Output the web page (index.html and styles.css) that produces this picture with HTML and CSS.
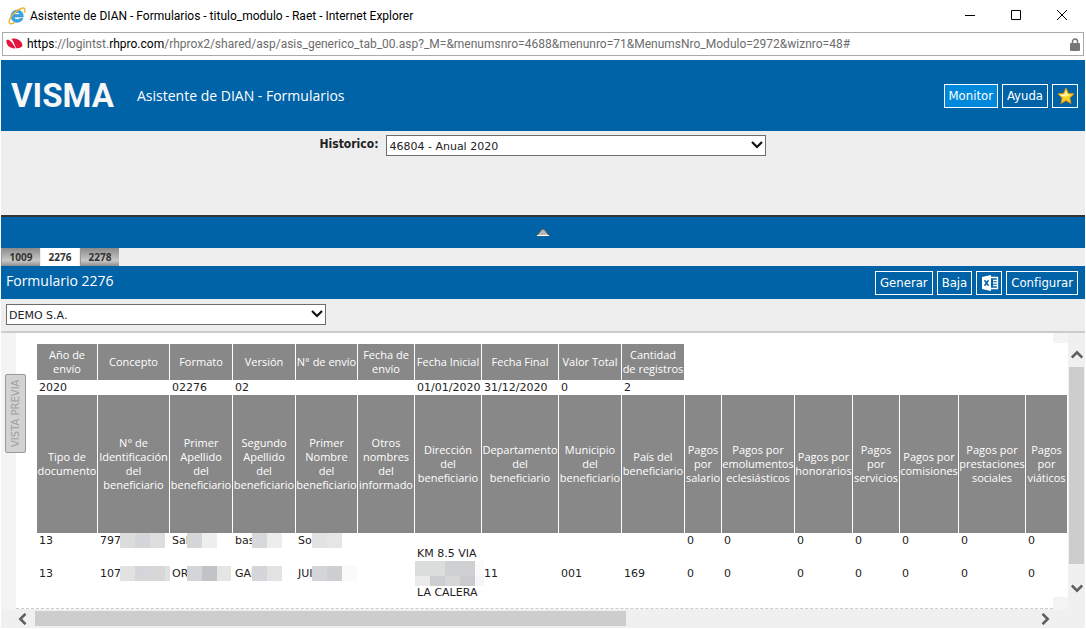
FILE: index.html
```html
<!DOCTYPE html>
<html lang="es">
<head>
<meta charset="utf-8">
<title>Asistente de DIAN - Formularios</title>
<link rel="stylesheet" href="styles.css">
</head>
<body>
<div class="window">
  <div class="titlebar">
    <svg class="ie-icon" width="18" height="18" viewBox="0 0 18 18" aria-hidden="true">
      <path d="M15.300 10H6c.2 1.700 1.500 2.600 3.300 2.600 1.100 0 2-.4 2.600-1.200h3c-.8 2.300-2.900 3.900-5.700 3.900-3.600 0-6.200-2.600-6.200-6s2.700-6.200 6.200-6.200c3.700 0 6.200 2.800 6.100 6.900zM6.100 7.600h5.900c-.3-1.500-1.400-2.200-2.900-2.200s-2.700.8-3 2.200z" fill="#35a7ea" stroke="#1678bd" stroke-width=".5"/>
      <path d="M1.600 16.300C.2 14.700 2.200 9.800 6.200 6c4.200-4 9.200-5.900 10.400-4.400.7.900.2 2.500-.6 4" fill="none" stroke="#eeb32c" stroke-width="1.400"/>
      <path d="M1.600 16.300c1 1 3.200.2 5.200-1" fill="none" stroke="#eeb32c" stroke-width="1.400"/>
    </svg>
    <span class="titlebar-text">Asistente de DIAN - Formularios - titulo_modulo - Raet - Internet Explorer</span>
    <div class="window-controls">
      <button type="button" aria-label="Minimizar"><svg width="12" height="12" viewBox="0 0 12 12"><path d="M1 5.500h10" stroke="#000"/></svg></button>
      <button type="button" aria-label="Maximizar"><svg width="12" height="12" viewBox="0 0 12 12"><path d="M1.500.5h9v9h-9z" fill="none" stroke="#000"/></svg></button>
      <button type="button" aria-label="Cerrar"><svg width="12" height="12" viewBox="0 0 12 12"><path d="M1 0l10 10M11 0L1 10" stroke="#000"/></svg></button>
    </div>
  </div>
  <div class="address">
    <svg width="18" height="12" viewBox="0 0 18 12" aria-hidden="true">
      <path d="M.5 2C3 .8 5.500 3 9.500 10.300 5 11-.5 7.500.5 2z" fill="#e3173e"/>
      <path d="M5.500 1c3.500-1.300 7.500.3 9.500 2.800 1.300 1.600 1.700 3.200 1.200 4.500-1.200 1.500-3.700 2.200-6 1.900C8.500 7.500 8.300 3.800 5.500 1z" fill="#e3173e"/>
    </svg>
    <span class="url"><b>https</b>://logintst.<b>rhpro.com</b>/rhprox2/shared/asp/asis_generico_tab_00.asp?_M=&amp;menumsnro=4688&amp;menunro=71&amp;MenumsNro_Modulo=2972&amp;wiznro=48#</span>
    <svg class="lock" width="10" height="13" viewBox="0 0 10 13" aria-hidden="true"><path d="M2.500 6V3.500a2.500 2.500 0 0 1 5 0V6" fill="none" stroke="#777" stroke-width="1.500"/><rect y="5" width="10" height="8" rx="1" fill="#777"/></svg>
  </div>

  <main class="page">
    <header class="banner">
      <span class="logo">VISMA</span>
      <h1>Asistente de DIAN - Formularios</h1>
      <div class="actions">
        <button type="button" class="btn btn-active">Monitor</button>
        <button type="button" class="btn">Ayuda</button>
        <button type="button" class="btn btn-icon" aria-label="Favoritos"><svg width="18" height="18" viewBox="0 0 18 18"><path d="M9 1l2.300 5.300 5.700.6-4.200 3.900 1.200 5.700L9 13.600 4 16.500l1.200-5.700L1 6.900l5.700-.6z" fill="#ffd324" stroke="#d99009" stroke-width="1" stroke-linejoin="round"/><path d="M9 3.300l1.500 4 3.500.5-4 1.500-5.500.2-1.800-1.800 4.500-.6z" fill="#fff2a0"/></svg></button>
      </div>
    </header>
    <section class="history">
      <label for="historico">Historico:</label>
      <span class="select select-wide">
        <select id="historico"><option>46804 - Anual 2020</option></select>
        <svg width="12" height="8" viewBox="0 0 12 8" aria-hidden="true"><path d="M1 1l5 5 5-5" fill="none" stroke="#111" stroke-width="2.200"/></svg>
      </span>
    </section>
    <button type="button" class="collapse" aria-label="Contraer"><svg width="16" height="9" viewBox="0 0 16 9"><path d="M1.500 7.800L7 1.200h2l5.500 6.600z" fill="#b5b5b5" stroke="#555"/><path d="M2 7.500h12" stroke="#fff"/></svg></button>
    <nav class="tabs">
      <button type="button" class="tab">1009</button>
      <button type="button" class="tab tab-current">2276</button>
      <button type="button" class="tab">2278</button>
    </nav>
    <div class="formbar">
      <h2>Formulario 2276</h2>
      <div class="actions">
        <button type="button" class="btn">Generar</button>
        <button type="button" class="btn">Baja</button>
        <button type="button" class="btn btn-icon" aria-label="Excel"><svg width="18" height="16" viewBox="0 0 18 16"><path d="M10 2.500h6.500v11H10M12 5.500h4M12 8h4M12 10.500h4" fill="none" stroke="#fff" stroke-width="1.300"/><path d="M1 2l9-2v16l-9-2z" fill="#fff"/><path d="M3.500 5.200l4 5.600M7.500 5.200l-4 5.600" stroke="#0063a8" stroke-width="1.500"/></svg></button>
        <button type="button" class="btn">Configurar</button>
      </div>
    </div>
    <div class="company">
      <span class="select">
        <select aria-label="Empresa"><option>DEMO S.A.</option></select>
        <svg width="12" height="8" viewBox="0 0 12 8" aria-hidden="true"><path d="M1 1l5 5 5-5" fill="none" stroke="#111" stroke-width="2.200"/></svg>
      </span>
    </div>

    <div class="viewer">
      <aside class="rail"><button type="button" class="preview">VISTA PREVIA</button></aside>
      <div class="sheet">
        <table>
          <colgroup><col class="w61"><col class="w72"><col class="w63"><col class="w63"><col class="w62"><col class="w57"><col class="w67"><col class="w77"><col class="w63"><col class="w63"><col class="w37"><col class="w73"><col class="w58"><col class="w47"><col class="w59"><col class="w67"><col class="w41"></colgroup>
          <tr class="head-short"><th>Año de<br>envío</th><th>Concepto</th><th>Formato</th><th>Versión</th><th>N° de envío</th><th>Fecha de<br>envío</th><th>Fecha Inicial</th><th>Fecha Final</th><th>Valor Total</th><th>Cantidad<br>de registros</th><td colspan="7"></td></tr>
          <tr class="row-short"><td>2020</td><td></td><td>02276</td><td>02</td><td></td><td></td><td>01/01/2020</td><td>31/12/2020</td><td>0</td><td>2</td><td colspan="7"></td></tr>
          <tr class="head-tall"><th>Tipo de<br>documento</th><th>N° de<br>Identificación<br>del<br>beneficiario</th><th>Primer<br>Apellido<br>del<br>beneficiario</th><th>Segundo<br>Apellido<br>del<br>beneficiario</th><th>Primer<br>Nombre<br>del<br>beneficiario</th><th>Otros<br>nombres<br>del<br>informado</th><th>Dirección<br>del<br>beneficiario</th><th>Departamento<br>del<br>beneficiario</th><th>Municipio<br>del<br>beneficiario</th><th>País del<br>beneficiario</th><th>Pagos<br>por<br>salario</th><th>Pagos por<br>emolumentos<br>eclesiásticos</th><th>Pagos por<br>honorarios</th><th>Pagos<br>por<br>servicios</th><th>Pagos por<br>comisiones</th><th>Pagos por<br>prestaciones<br>sociales</th><th>Pagos<br>por<br>viáticos</th></tr>
          <tr class="row-person"><td>13</td>
            <td><div class="masked mask-id"><span>797</span><svg width="45" height="15"><rect width="15" height="15" fill="#dbdddc"/><rect x="15" width="15" height="15" fill="#d5d6d9"/><rect x="30" width="15" height="15" fill="#dddddd"/></svg></div></td>
            <td><div class="masked mask-a"><span>Sal</span><svg width="30" height="15"><rect width="15" height="15" fill="#d5d6d9"/><rect x="15" width="15" height="15" fill="#edefee"/></svg></div></td>
            <td><div class="masked mask-b"><span>bas</span><svg width="30" height="15"><rect width="15" height="15" fill="#d7d8db"/><rect x="15" width="15" height="15" fill="#eceeed"/></svg></div></td>
            <td><div class="masked mask-c"><span>So</span><svg width="30" height="15"><rect width="15" height="15" fill="#e2e2e2"/><rect x="15" width="15" height="15" fill="#e5e7e6"/></svg></div></td>
            <td></td><td></td><td></td><td></td><td></td><td>0</td><td>0</td><td>0</td><td>0</td><td>0</td><td>0</td><td>0</td></tr>
          <tr class="row-tall"><td>13</td>
            <td><div class="masked mask-id"><span>107</span><svg width="50" height="15"><rect width="15" height="15" fill="#e2e2e2"/><rect x="15" width="15" height="15" fill="#d5d6d9"/><rect x="30" width="15" height="15" fill="#d7d7d8"/><rect x="45" width="5" height="15" fill="#dee1df"/></svg></div></td>
            <td><div class="masked mask-a"><span>OR</span><svg width="44" height="15"><rect width="15" height="15" fill="#d4d5d8"/><rect x="15" width="15" height="15" fill="#c2c3c6"/><rect x="30" width="14" height="15" fill="#e3e6e4"/></svg></div></td>
            <td><div class="masked mask-b"><span>GAI</span><svg width="30" height="15"><rect width="15" height="15" fill="#d5d6d9"/><rect x="15" width="15" height="15" fill="#e3e3e3"/></svg></div></td>
            <td><div class="masked mask-c"><span>JUI</span><svg width="45" height="15"><rect width="15" height="15" fill="#d4d5d8"/><rect x="15" width="15" height="15" fill="#cecfd1"/><rect x="30" width="15" height="15" fill="#fafafa"/></svg></div></td>
            <td></td>
            <td><div class="street">KM 8.5 VIA<svg width="69" height="25"><rect width="30" height="15" fill="#dbdddc"/><rect x="30" width="30" height="15" fill="#cfd0d2"/><rect x="60" width="9" height="15" fill="#fafafa"/><rect y="15" width="15" height="10" fill="#ebebeb"/><rect x="15" y="15" width="15" height="10" fill="#cdced1"/><rect x="30" y="15" width="15" height="10" fill="#d7d7d7"/><rect x="45" y="15" width="15" height="10" fill="#c9cbcc"/><rect x="60" y="15" width="9" height="10" fill="#f6f6f6"/></svg>LA CALERA</div></td>
            <td>11</td><td>001</td><td>169</td><td>0</td><td>0</td><td>0</td><td>0</td><td>0</td><td>0</td><td>0</td></tr>
        </table>
      </div>
      <div class="vscroll">
        <button type="button" aria-label="Subir"><svg width="12" height="9" viewBox="0 0 12 9"><path d="M.8 7.500L6 2.300l5.200 5.200" fill="none" stroke="#606060" stroke-width="2.600"/></svg></button>
        <span class="vtrack"><span class="vthumb"></span></span>
        <button type="button" aria-label="Bajar"><svg width="12" height="9" viewBox="0 0 12 9"><path d="M.8 1.500L6 6.700l5.200-5.200" fill="none" stroke="#606060" stroke-width="2.600"/></svg></button>
      </div>
    </div>
    <div class="hscroll">
      <button type="button" aria-label="Izquierda"><svg width="9" height="12" viewBox="0 0 9 12"><path d="M7.500.8L2.300 6l5.200 5.200" fill="none" stroke="#606060" stroke-width="2.600"/></svg></button>
      <span class="htrack"><span class="hthumb"></span></span>
      <button type="button" aria-label="Derecha"><svg width="9" height="12" viewBox="0 0 9 12"><path d="M1.500.8L6.700 6l-5.200 5.200" fill="none" stroke="#606060" stroke-width="2.600"/></svg></button>
    </div>
  </main>
</div>
</body>
</html>
```
FILE: styles.css
```css
* { box-sizing: border-box; }
body { margin: 0; background: #fff; color: #222; font: 11px/14px "DejaVu Sans", sans-serif; }
button { font-family: inherit; padding: 0; border: 0; background: none; }
svg { display: block; flex: none; }
h1, h2 { margin: 0; font: 14px/20px "Open Sans", sans-serif; color: #fff; }

.titlebar { display: flex; align-items: center; height: 32px; padding: 0 1px 0 8px; font: 12px/16px Roboto, sans-serif; color: #000; white-space: nowrap; }
.titlebar-text { margin-left: 4px; }
.window-controls { display: flex; margin-left: auto; }
.window-controls button { display: grid; place-items: center; width: 46px; height: 30px; }

.address { display: flex; align-items: center; height: 24px; margin: 0 2px 4px; padding: 0 3px; border: 1px solid #aaa; font: 12px/16px Roboto, sans-serif; color: #6d6d6d; white-space: nowrap; }
.address b { font-weight: 400; color: #000; }
.url { margin-left: 3px; }
.lock { margin-left: auto; }

.page { margin: 0 1px; background: #eee; }
.banner { display: flex; align-items: center; height: 71px; padding: 0 7px 0 10px; background: #0063a8; }
.logo { width: 126px; color: #f7f7f7; font: bold 33px/40px Roboto, sans-serif; }
.actions { display: flex; gap: 4px; margin-left: auto; }
.btn { display: grid; place-items: center; height: 24px; padding: 0 4px; border: 1px solid #fff; color: #fff; font: 13px/18px "DejaVu Sans Condensed", "DejaVu Sans", sans-serif; }
.btn-active { background: #0088dd; }
.btn-icon { width: 26px; }

.history { display: flex; justify-content: center; gap: 8px; height: 86px; padding-top: 4px; border-bottom: 2px solid #333; }
.history label { font: bold 12px/18px "DejaVu Sans Condensed", "DejaVu Sans", sans-serif; }
.select { position: relative; display: block; width: 320px; height: 21px; }
.select-wide { width: 380px; }
.select select { appearance: none; width: 100%; height: 100%; padding: 2px 2px 0; border: 1px solid #6d6d6d; border-radius: 0; background: #fff; color: #222; font: 11px/14px "DejaVu Sans", sans-serif; }
.select svg { position: absolute; right: 3px; top: 6px; pointer-events: none; }

.collapse { display: grid; place-items: center; width: 100%; height: 31px; background: #0063a8; }
.tabs { display: flex; height: 18px; gap: 1px; }
.tab { width: 39px; border-left: 1px solid #999; background: linear-gradient(#8a8a8a, #c8c8c8 70%, #8e8e8e); color: #333; font: bold 10px/16px "Noto Sans", sans-serif; }
.tab-current { width: 38px; border-left: 0; background: #fff; }
.formbar { display: flex; align-items: center; height: 33px; padding: 0 7px 0 5px; background: #0063a8; }
.formbar h2 { padding-bottom: 4px; }
.company { height: 34px; padding: 5px; border-bottom: 2px solid #ccc; }

.viewer { position: relative; display: flex; background: #fff; }
.viewer::before, .viewer::after { content: ""; position: absolute; right: 17px; width: 15px; height: 10px; background: #f4f4f4; }
.viewer::before { top: 0; }
.viewer::after { bottom: 0; height: 12px; }
.rail { width: 15px; background: #f4f4f4; }
.preview { margin: 41px 0 0 4px; width: 21px; height: 79px; border: 1px solid #999; border-radius: 2px; background: #d2d2d2; color: #a0a0a0; font: 10px/18px "DejaVu Sans", sans-serif; writing-mode: vertical-rl; transform: rotate(180deg); white-space: nowrap; }
.sheet { flex: 1; min-width: 0; height: 276px; padding: 11px 0 0 21px; border-bottom: 1px dashed #ccc; overflow: hidden; }
table { width: 1031px; table-layout: fixed; border-collapse: separate; border-spacing: 0; }
.w37 { width: 37px; } .w41 { width: 42px; } .w47 { width: 47px; } .w57 { width: 57px; }
.w58 { width: 58px; } .w59 { width: 59px; } .w61 { width: 61px; } .w62 { width: 62px; }
.w63 { width: 63px; } .w67 { width: 67px; } .w72 { width: 72px; } .w73 { width: 73px; } .w77 { width: 77px; }
th { padding: 0; border-right: 1px solid #fff; background: #888; color: #fff; font: 11px/14px "Open Sans", sans-serif; text-align: center; white-space: nowrap; }
td { padding: 0 0 0 2px; line-height: 13px; white-space: nowrap; }
.head-short { height: 36px; }
.row-short { height: 15px; }
.row-person { height: 14px; }
.head-tall { height: 138px; }
.row-tall { height: 48px; }
.masked { display: flex; align-items: center; height: 13px; }
.mask-id span { width: 20px; }
.mask-a span { width: 15px; }
.mask-b span { width: 17px; }
.mask-c span { width: 14px; }
.street svg { margin: 1px 0 0 -2px; }

.vscroll { display: flex; flex-direction: column; align-items: center; width: 17px; padding: 13px 0 12px; background: #f0f0f0; }
.vscroll button { display: grid; place-items: center; width: 17px; height: 17px; }
.vtrack { flex: 1; width: 15px; padding: 4px 0; }
.vthumb { display: block; height: 197px; background: #cdcdcd; }
.hscroll { display: flex; align-items: center; height: 19px; padding: 0 31px 0 13px; background: #f0f0f0; }
.hscroll button { display: grid; place-items: center; width: 17px; height: 17px; }
.htrack { flex: 1; padding-left: 4px; }
.hthumb { display: block; width: 59%; height: 15px; background: #cdcdcd; }
```
